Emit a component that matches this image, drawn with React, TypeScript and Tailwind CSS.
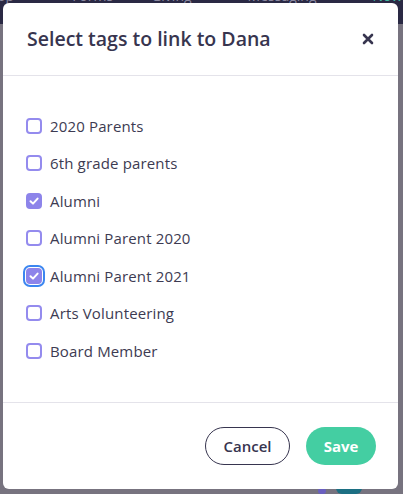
import { useState } from 'react';

const TAGS = [
  { label: '2020 Parents', checked: false },
  { label: '6th grade parents', checked: false },
  { label: 'Alumni', checked: true },
  { label: 'Alumni Parent 2020', checked: false },
  { label: 'Alumni Parent 2021', checked: true, focused: true },
  { label: 'Arts Volunteering', checked: false },
  { label: 'Board Member', checked: false },
];

const Check = ({ checked, focused }: { checked: boolean; focused?: boolean }) => (
  <span
    className={
      'flex h-4 w-4 shrink-0 items-center justify-center rounded-[4px] border-2 ' +
      (checked ? 'border-[#8d84ea] bg-[#8d84ea] ' : 'border-[#948bee] bg-white ') +
      (focused ? 'ring-2 ring-[#3b86f0] ring-offset-1' : '')
    }
  >
    {checked && (
      <svg viewBox="0 0 12 12" className="h-3 w-3" fill="none">
        <path d="M2.5 6.2 5 8.6 9.6 3.6" stroke="white" strokeWidth="2" strokeLinecap="round" strokeLinejoin="round" />
      </svg>
    )}
  </span>
);

export default function App() {
  const [tags, setTags] = useState(TAGS);

  return (
    <div className="relative h-[494px] w-[403px] overflow-hidden bg-[#77737f] font-['Open_Sans',sans-serif]">
      {/* app nav behind the overlay, mostly hidden by the dialog */}
      <div className="flex h-[24px] items-start overflow-hidden bg-[#2a2944] text-[14px] leading-[14px] text-[#8a88a0]">
        <span className="-mt-[11px] -ml-[3px]">pp</span>
        <span className="-mt-[11px] ml-[58px]">Forms</span>
        <span className="-mt-[11px] ml-[38px]">Giving</span>
        <span className="-mt-[11px] ml-[56px]">Messaging</span>
        <span className="-mt-[11px] ml-[56px] text-[#3fb7a0]">Now</span>
      </div>

      <div className="absolute bottom-0 left-[318px] h-[6px] w-[8px] rounded-full bg-[#6a5fc0]" />
      <div className="absolute bottom-0 left-[336px] h-[6px] w-[26px] rounded-b-full bg-[#1c6f83]" />

      <div className="absolute left-[3px] top-[3px] flex h-[486px] w-[395px] flex-col rounded-[6px] bg-white">
        <div className="flex h-[73px] items-center justify-between border-b border-[#e4e3ea] pl-[24px] pr-[24px]">
          <h2 className="text-[19.5px] font-semibold tracking-[0px] text-[#37354f]">Select tags to link to Dana</h2>
          <svg viewBox="0 0 12 12" className="h-[12px] w-[12px]" fill="none">
            <path d="M2 2 10 10M10 2 2 10" stroke="#37354f" strokeWidth="2.6" strokeLinecap="round" />
          </svg>
        </div>

        <div className="flex flex-1 flex-col px-[23px] py-[31px]">
          {tags.map((t, i) => (
            <label key={t.label} className="flex h-[37.5px] cursor-pointer items-center gap-[8px]">
              <input
                type="checkbox"
                className="hidden"
                checked={t.checked}
                onChange={() =>
                  setTags(tags.map((x, j) => (j === i ? { ...x, checked: !x.checked } : x)))
                }
              />
              <Check checked={t.checked} focused={t.focused} />
              <span className="text-[15px] tracking-[0.15px] text-[#3d3b52]">{t.label}</span>
            </label>
          ))}
        </div>

        <div className="flex h-[87px] items-center justify-end gap-[16px] border-t border-[#e4e3ea] pr-[22px]">
          <button className="h-[38px] w-[85px] rounded-full border border-[#37354f] text-[15px] font-semibold text-[#37354f]">
            Cancel
          </button>
          <button className="h-[38px] w-[70px] rounded-full bg-[#44cea2] text-[15px] font-bold text-white">
            Save
          </button>
        </div>
      </div>
    </div>
  );
}
